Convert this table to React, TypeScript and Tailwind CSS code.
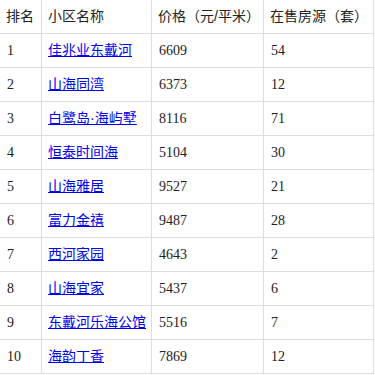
import { Fragment } from 'react';

const rows = [
  { rank: 1, name: '佳兆业东戴河', price: 6609, count: 54 },
  { rank: 2, name: '山海同湾', price: 6373, count: 12 },
  { rank: 3, name: '白鹭岛·海屿墅', price: 8116, count: 71 },
  { rank: 4, name: '恒泰时间海', price: 5104, count: 30 },
  { rank: 5, name: '山海雅居', price: 9527, count: 21 },
  { rank: 6, name: '富力金禧', price: 9487, count: 28 },
  { rank: 7, name: '西河家园', price: 4643, count: 2 },
  { rank: 8, name: '山海宜家', price: 5437, count: 6 },
  { rank: 9, name: '东戴河乐海公馆', price: 5516, count: 7 },
  { rank: 10, name: '海韵丁香', price: 7869, count: 12 },
];

// latin glyphs (· and /) stay narrow, han falls through to Noto CJK
const cjk = "font-['Liberation_Sans','Noto_Sans_CJK_SC',sans-serif] pl-[6px]";
const serif = "font-['Liberation_Serif','Noto_Sans_CJK_SC',serif] pl-[7px]";
const cell = 'h-[34px] flex items-center border-r border-b border-[#dddddd] whitespace-nowrap text-[14px]';

export default function App() {
  return (
    <div className="w-[375px] h-[375px] bg-white overflow-hidden">
      <div className="grid grid-cols-[42px_110px_112px_110px] text-[#222222]">
        <div className={`${cell} ${cjk}`}>排名</div>
        <div className={`${cell} ${cjk}`}>小区名称</div>
        <div className={`${cell} ${cjk}`}>价格（元/平米）</div>
        <div className={`${cell} ${cjk}`}>在售房源（套）</div>
        {rows.map((r) => (
          <Fragment key={r.rank}>
            <div className={`${cell} ${serif}`}>{r.rank}</div>
            <div className={`${cell} ${cjk}`}>
              <a href="#" className="text-[#0000ee] underline">{r.name}</a>
            </div>
            <div className={`${cell} ${serif}`}>{r.price}</div>
            <div className={`${cell} ${serif}`}>{r.count}</div>
          </Fragment>
        ))}
      </div>
    </div>
  );
}
